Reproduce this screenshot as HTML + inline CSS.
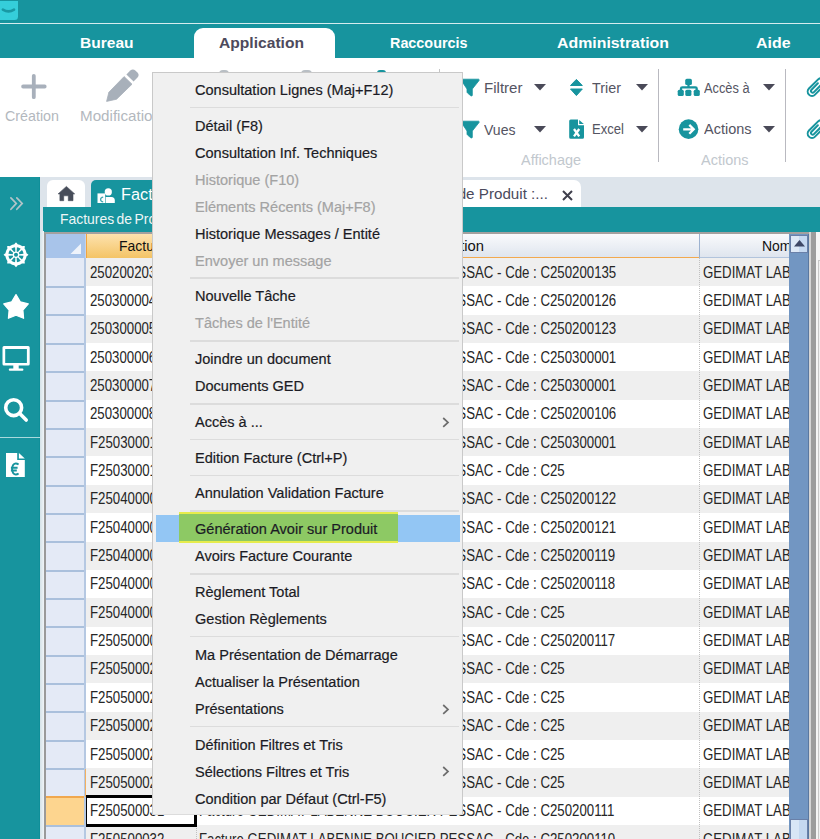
<!DOCTYPE html>
<html><head><meta charset="utf-8">
<style>
*{box-sizing:border-box;margin:0;padding:0}
html,body{width:820px;height:839px;overflow:hidden;background:#fff;font-family:"Liberation Sans",sans-serif}
.a{position:absolute}
.t{position:absolute;white-space:nowrap;line-height:1;transform-origin:0 0}
</style></head><body>
<div class="a" style="left:0;top:0;width:820px;height:57.5px;background:#17949e"></div>
<div class="a" style="left:0;top:0.8px;width:18.3px;height:19.4px;background:#35ceda;border-radius:0 0 3.5px 0"></div>
<svg class="a" style="left:0;top:0" width="18" height="20"><path d="M2.9 9.7 Q8.6 13.2 14 9.7" stroke="#1999a4" stroke-width="2.7" fill="none" stroke-linecap="round"/></svg>
<div class="a" style="left:0;top:22.8px;width:820px;height:1.7px;background:#d5ecee"></div>
<div class="a" style="left:193.5px;top:27.7px;width:141px;height:30px;background:#fff;border-radius:9px 9px 0 0"></div>
<div class="t" style="left:80.3px;top:35.08px;font-size:15.5px;color:#fff;font-weight:700;transform:scaleX(1.0018)">Bureau</div>
<div class="t" style="left:219.3px;top:34.68px;font-size:15.5px;color:#4d4a5c;font-weight:700;transform:scaleX(1.0072)">Application</div>
<div class="t" style="left:390.3px;top:34.68px;font-size:15.5px;color:#fff;font-weight:700;transform:scaleX(0.9273)">Raccourcis</div>
<div class="t" style="left:557px;top:34.98px;font-size:15.5px;color:#fff;font-weight:700;transform:scaleX(1.0240)">Administration</div>
<div class="t" style="left:756px;top:35.08px;font-size:15.5px;color:#fff;font-weight:700;transform:scaleX(1.0270)">Aide</div>
<svg class="a" style="left:20px;top:73px" width="28" height="28"><path d="M13.8 2.8 V24.2 M3.1 13.5 H24.7" stroke="#a8b0bb" stroke-width="3.8" stroke-linecap="round"/></svg>
<div class="t" style="left:5.2px;top:109.72px;font-size:13.8px;color:#b3b8be;transform:scaleX(1.0354)">Création</div>
<svg class="a" style="left:100px;top:64px" width="44" height="44"><path d="M6.6 37.4 L8.9 28.2 L24.1 12.6 L32 20.2 L16.6 35.2 Z" fill="#a8b0ba" stroke="#a8b0ba" stroke-width="0.8" stroke-linejoin="round"/><path d="M26.4 10.5 L30.3 6.6 Q32.9 4.4 35.6 6.8 L37.4 8.6 Q39.8 11.2 37.5 13.6 L33.6 17.6 Z" fill="#a8b0ba"/></svg>
<div class="t" style="left:80.3px;top:109.72px;font-size:13.8px;color:#b3b8be;transform:scaleX(1.1002)">Modification</div>
<div class="a" style="left:218.5px;top:70.3px;width:10px;height:4px;background:#b8bec4;border-radius:4px 4px 0 0"></div>
<div class="a" style="left:300.5px;top:70.3px;width:11px;height:4px;background:#b8bec4;border-radius:4px 4px 0 0"></div>
<div class="a" style="left:377px;top:69.5px;width:9px;height:4px;background:#17949e;border-radius:3px 3px 0 0"></div>
<div class="a" style="left:439px;top:69px;width:1px;height:94px;background:#c4c4c4"></div>
<svg class="a" style="left:455px;top:76px" width="30" height="24"><path d="M5.5 3.2 H23.6 Q24.6 3.4 24 4.6 L17.3 13 V19 Q17.3 20.6 15.8 19.8 L12.5 17 Q12 16.5 12 15.8 V13 Z" fill="#17949e" stroke="#17949e" stroke-width="0.8" stroke-linejoin="round"/></svg>
<div class="t" style="left:484.2px;top:80.75px;font-size:14px;color:#545462;transform:scaleX(1.0760)">Filtrer</div>
<svg class="a" style="left:534px;top:84px" width="12" height="7"><path d="M0 0 H12 L6 6.5 Z" fill="#4a4a58"/></svg>
<svg class="a" style="left:564px;top:76px" width="26" height="24"><path d="M12.4 3.4 L18.3 9.5 H6.5 Z M6.5 13 H18.3 L12.4 19.6 Z" fill="#17949e" stroke="#17949e" stroke-width="1" stroke-linejoin="round"/></svg>
<div class="t" style="left:591.5px;top:80.75px;font-size:14px;color:#545462;transform:scaleX(1.0260)">Trier</div>
<svg class="a" style="left:636px;top:84px" width="12" height="7"><path d="M0 0 H12 L6 6.5 Z" fill="#4a4a58"/></svg>
<svg class="a" style="left:455px;top:118px" width="30" height="24"><path d="M5.5 3.2 H23.6 Q24.6 3.4 24 4.6 L17.3 13 V19 Q17.3 20.6 15.8 19.8 L12.5 17 Q12 16.5 12 15.8 V13 Z" fill="#17949e" stroke="#17949e" stroke-width="0.8" stroke-linejoin="round"/></svg>
<div class="t" style="left:484px;top:122.95px;font-size:14px;color:#545462;transform:scaleX(1.0035)">Vues</div>
<svg class="a" style="left:534px;top:126px" width="12" height="7"><path d="M0 0 H12 L6 6.5 Z" fill="#4a4a58"/></svg>
<svg class="a" style="left:564px;top:116px" width="26" height="26"><path d="M5.2 5 Q5.2 3.5 6.7 3.5 H14 V9.3 H20 V21.3 Q20 22.8 18.5 22.8 H6.7 Q5.2 22.8 5.2 21.3 Z" fill="#17949e"/><path d="M15.2 3.9 L19.8 8.1 H15.2 Z" fill="#17949e"/><path d="M10 13 L15.2 20.4 M15.2 13 L10 20.4" stroke="#fff" stroke-width="2.3"/></svg>
<div class="t" style="left:591.5px;top:122.45px;font-size:14px;color:#545462;transform:scaleX(0.9347)">Excel</div>
<svg class="a" style="left:636px;top:126px" width="12" height="7"><path d="M0 0 H12 L6 6.5 Z" fill="#4a4a58"/></svg>
<div class="t" style="left:520.8px;top:152.53px;font-size:14.5px;color:#c2c8ce;transform:scaleX(0.9966)">Affichage</div>
<div class="a" style="left:658.3px;top:69px;width:1.2px;height:93px;background:#b9b9c0"></div>
<svg class="a" style="left:674px;top:74px" width="30" height="26"><rect x="11.2" y="4.8" width="6.7" height="6.3" rx="1.6" fill="#17949e"/><path d="M14.5 10 V14 M7 16.5 V14.6 Q7 13.3 8.3 13.3 H21.4 Q22.7 13.3 22.7 14.6 V16.5" stroke="#17949e" stroke-width="2.3" fill="none"/><rect x="3.7" y="15.7" width="6.1" height="6.4" rx="1.6" fill="#17949e"/><rect x="11.3" y="15.7" width="6.1" height="6.4" rx="1.6" fill="#17949e"/><rect x="19.7" y="15.7" width="6.1" height="6.4" rx="1.6" fill="#17949e"/></svg>
<div class="t" style="left:703.5px;top:80.75px;font-size:14px;color:#545462;transform:scaleX(0.9134)">Accès à</div>
<svg class="a" style="left:763px;top:84px" width="12" height="7"><path d="M0 0 H12 L6 6.5 Z" fill="#4a4a58"/></svg>
<svg class="a" style="left:674px;top:114px" width="30" height="30"><circle cx="14.55" cy="15.15" r="9.8" fill="#17949e"/><path d="M9.2 15.3 H19.6 M15.3 10.9 L19.7 15.3 L15.3 19.7" stroke="#fff" stroke-width="2.3" fill="none" stroke-linejoin="miter"/></svg>
<div class="t" style="left:703.5px;top:122.35px;font-size:14px;color:#545462;transform:scaleX(1.0344)">Actions</div>
<svg class="a" style="left:763px;top:125.5px" width="12" height="7"><path d="M0 0 H12 L6 6.5 Z" fill="#4a4a58"/></svg>
<div class="t" style="left:701px;top:152.53px;font-size:14.5px;color:#c2c8ce;transform:scaleX(0.9987)">Actions</div>
<div class="a" style="left:785px;top:69px;width:1.2px;height:93px;background:#b9b9c0"></div>
<svg class="a" style="left:796px;top:72px" width="24" height="30"><g transform="translate(16 19.6) rotate(45)"><path d="M-1.7 -10 V-1 A1.7 1.7 0 0 0 1.7 -1 V-13 A3 3 0 0 0 -4.3 -13 V0 A4.3 4.3 0 0 0 4.3 0 V-20" stroke="#17949e" stroke-width="2" fill="none" stroke-linecap="round"/></g></svg>
<svg class="a" style="left:796px;top:114px" width="24" height="30"><g transform="translate(16 19.6) rotate(45)"><path d="M-1.7 -10 V-1 A1.7 1.7 0 0 0 1.7 -1 V-13 A3 3 0 0 0 -4.3 -13 V0 A4.3 4.3 0 0 0 4.3 0 V-20" stroke="#17949e" stroke-width="2" fill="none" stroke-linecap="round"/></g></svg>
<div class="a" style="left:0;top:177px;width:820px;height:662px;background:#dde4eb"></div>
<div class="a" style="left:0;top:177px;width:40.3px;height:662px;background:#17949e"></div>
<div class="a" style="left:39.2px;top:177px;width:1.1px;height:662px;background:#0f8f99"></div>
<svg class="a" style="left:0;top:188px" width="32" height="32"><path d="M10.9 9.8 L16.3 15.4 L10.9 21.3 M16.8 9.8 L22.2 15.4 L16.8 21.3" stroke="#b3c4c8" stroke-width="1.7" fill="none" stroke-linecap="round"/></svg>
<svg class="a" style="left:0;top:0" width="41" height="480"><path fill-rule="evenodd" d="M28.40 254.80 L27.94 255.27 L27.46 255.70 L26.97 256.10 L26.47 256.46 L26.40 256.87 L26.31 257.27 L26.20 257.68 L26.08 258.08 L25.94 258.47 L25.79 258.86 L25.63 259.24 L25.44 259.61 L25.25 259.98 L25.04 260.34 L24.81 260.69 L24.58 261.03 L24.68 261.64 L24.74 262.27 L24.78 262.91 L24.77 263.57 L24.11 263.58 L23.47 263.54 L22.84 263.48 L22.23 263.38 L21.89 263.61 L21.54 263.84 L21.18 264.05 L20.81 264.24 L20.44 264.43 L20.06 264.59 L19.67 264.74 L19.28 264.88 L18.88 265.00 L18.47 265.11 L18.07 265.20 L17.66 265.27 L17.30 265.77 L16.90 266.26 L16.47 266.74 L16.00 267.20 L15.53 266.74 L15.10 266.26 L14.70 265.77 L14.34 265.27 L13.93 265.20 L13.53 265.11 L13.12 265.00 L12.72 264.88 L12.33 264.74 L11.94 264.59 L11.56 264.43 L11.19 264.24 L10.82 264.05 L10.46 263.84 L10.11 263.61 L9.77 263.38 L9.16 263.48 L8.53 263.54 L7.89 263.58 L7.23 263.57 L7.22 262.91 L7.26 262.27 L7.32 261.64 L7.42 261.03 L7.19 260.69 L6.96 260.34 L6.75 259.98 L6.56 259.61 L6.37 259.24 L6.21 258.86 L6.06 258.47 L5.92 258.08 L5.80 257.68 L5.69 257.27 L5.60 256.87 L5.53 256.46 L5.03 256.10 L4.54 255.70 L4.06 255.27 L3.60 254.80 L4.06 254.33 L4.54 253.90 L5.03 253.50 L5.53 253.14 L5.60 252.73 L5.69 252.33 L5.80 251.92 L5.92 251.52 L6.06 251.13 L6.21 250.74 L6.37 250.36 L6.56 249.99 L6.75 249.62 L6.96 249.26 L7.19 248.91 L7.42 248.57 L7.32 247.96 L7.26 247.33 L7.22 246.69 L7.23 246.03 L7.89 246.02 L8.53 246.06 L9.16 246.12 L9.77 246.22 L10.11 245.99 L10.46 245.76 L10.82 245.55 L11.19 245.36 L11.56 245.17 L11.94 245.01 L12.33 244.86 L12.72 244.72 L13.12 244.60 L13.53 244.49 L13.93 244.40 L14.34 244.33 L14.70 243.83 L15.10 243.34 L15.53 242.86 L16.00 242.40 L16.47 242.86 L16.90 243.34 L17.30 243.83 L17.66 244.33 L18.07 244.40 L18.47 244.49 L18.88 244.60 L19.28 244.72 L19.67 244.86 L20.06 245.01 L20.44 245.17 L20.81 245.36 L21.18 245.55 L21.54 245.76 L21.89 245.99 L22.23 246.22 L22.84 246.12 L23.47 246.06 L24.11 246.02 L24.77 246.03 L24.78 246.69 L24.74 247.33 L24.68 247.96 L24.58 248.57 L24.81 248.91 L25.04 249.26 L25.25 249.62 L25.44 249.99 L25.63 250.36 L25.79 250.74 L25.94 251.13 L26.08 251.52 L26.20 251.92 L26.31 252.33 L26.40 252.73 L26.47 253.14 L26.97 253.50 L27.46 253.90 L27.94 254.33 Z M19.34 255.42 L23.54 255.73 A7.6 7.6 0 0 1 21.99 259.48 L18.80 256.73 A3.4 3.4 0 0 0 19.34 255.42 Z M17.93 257.60 L20.68 260.79 A7.6 7.6 0 0 1 16.93 262.34 L16.62 258.14 A3.4 3.4 0 0 0 17.93 257.60 Z M15.38 258.14 L15.07 262.34 A7.6 7.6 0 0 1 11.32 260.79 L14.07 257.60 A3.4 3.4 0 0 0 15.38 258.14 Z M13.20 256.73 L10.01 259.48 A7.6 7.6 0 0 1 8.46 255.73 L12.66 255.42 A3.4 3.4 0 0 0 13.20 256.73 Z M12.66 254.18 L8.46 253.87 A7.6 7.6 0 0 1 10.01 250.12 L13.20 252.87 A3.4 3.4 0 0 0 12.66 254.18 Z M14.07 252.00 L11.32 248.81 A7.6 7.6 0 0 1 15.07 247.26 L15.38 251.46 A3.4 3.4 0 0 0 14.07 252.00 Z M16.62 251.46 L16.93 247.26 A7.6 7.6 0 0 1 20.68 248.81 L17.93 252.00 A3.4 3.4 0 0 0 16.62 251.46 Z M18.80 252.87 L21.99 250.12 A7.6 7.6 0 0 1 23.54 253.87 L19.34 254.18 A3.4 3.4 0 0 0 18.80 252.87 Z M18.00 254.8 A2 2 0 1 0 14.00 254.8 A2 2 0 1 0 18.00 254.8 Z" fill="#fff"/></svg>
<svg class="a" style="left:0;top:290px" width="32" height="32"><path d="M16 4.6 L20.3 11.8 L28.3 13.9 L22.9 20 L23.6 28.3 L16 25.3 L8.4 28.3 L9.1 20 L3.7 13.9 L11.7 11.8 Z" fill="#fff" stroke="#fff" stroke-width="1.2" stroke-linejoin="round"/></svg>
<svg class="a" style="left:0;top:342px" width="32" height="32"><path fill-rule="evenodd" d="M4 4.1 H28.2 Q29.7 4.1 29.7 5.6 V22.1 Q29.7 23.6 28.2 23.6 H4 Q2.5 23.6 2.5 22.1 V5.6 Q2.5 4.1 4 4.1 Z M5.2 7 V21.1 H26.9 V7 Z" fill="#fff"/><rect x="13.3" y="23" width="5.4" height="4" fill="#fff"/><rect x="8.8" y="26.5" width="14.6" height="2.2" rx="1" fill="#fff"/></svg>
<svg class="a" style="left:0;top:394px" width="32" height="32"><circle cx="13.65" cy="13.65" r="7.95" fill="none" stroke="#fff" stroke-width="3.6"/><path d="M20 19.8 L26.2 26" stroke="#fff" stroke-width="3.6" stroke-linecap="round"/></svg>
<div class="a" style="left:0;top:436.5px;width:40.3px;height:1.4px;background:#a9dadd"></div>
<svg class="a" style="left:0;top:448px" width="32" height="32"><path d="M6 5.1 H17.2 V12.1 H24.8 V29.1 H6 Z" fill="#fff"/><path d="M18.9 5.1 L24.8 10.5 H18.9 Z" fill="#fff"/><path d="M18.6 16.5 Q16.8 15.2 15 15.6 Q12.3 16.4 12.1 21 Q12.3 25.6 15 26.4 Q16.8 26.8 18.6 25.5 M10.9 19.8 H17.6 M10.9 22.5 H16.8" stroke="#17949e" stroke-width="1.9" fill="none"/></svg>
<div class="a" style="left:47px;top:179.5px;width:38px;height:28px;background:#fff;border-radius:6px 6px 0 0"></div>
<svg class="a" style="left:54px;top:182px" width="24" height="24"><path d="M12.4 4.4 L20.7 11.9 H19 V18.7 H14.3 V13.8 H9.7 V18.7 H5.9 V11.9 H4.1 Z" fill="#474d5a" stroke="#474d5a" stroke-width="0.6" stroke-linejoin="round"/></svg>
<div class="a" style="left:91.2px;top:180.2px;width:120px;height:28px;background:#17949e;border-radius:5px 5px 0 0"></div>
<svg class="a" style="left:94px;top:184px" width="24" height="24"><circle cx="14.3" cy="7.9" r="3.6" fill="#fff"/><path d="M11.7 19 V12.9 H17.5 Q20.8 12.9 20.8 16.5 V19 Z" fill="#fff"/><rect x="3.5" y="9.4" width="7.7" height="9.6" fill="#fff"/><path d="M9.2 13.2 Q6.6 13.6 6.6 15.5 Q6.6 17.6 9.2 17.8" stroke="#17949e" stroke-width="1.3" fill="none" opacity="0.8"/></svg>
<div class="t" style="left:121px;top:186.00px;font-size:16.3px;color:#fff">Factures de Produit</div>
<div class="a" style="left:380px;top:179.5px;width:200.5px;height:28px;background:#fff;border-radius:7px 7px 0 0"></div>
<div class="t" style="left:401.95px;top:186.13px;font-size:15.2px;color:#4a4a5c">Facture de Produit :...</div>
<svg class="a" style="left:561.5px;top:189.5px" width="11" height="11"><path d="M1 1 L10 10 M10 1 L1 10" stroke="#3f3f4c" stroke-width="2"/></svg>
<div class="a" style="left:43px;top:207px;width:777px;height:24.6px;background:#17949e"></div>
<div class="a" style="left:40.3px;top:231px;width:3.7px;height:608px;background:linear-gradient(90deg,#d4e2e8,#f0f4f7)"></div>
<div class="t" style="left:59.8px;top:211.77px;font-size:14.8px;color:#eef6f6;transform:scaleX(0.94);word-spacing:-1.5px">Factures de Produit</div>
<div class="a" style="left:44px;top:232px;width:767px;height:607px;background:#fff;border-left:2px solid #9a9a9a;border-top:2px solid #a3a09f"></div>
<div class="a" style="left:46px;top:234px;width:39.5px;height:24px;background:#a8c4ea;border-right:1px solid #c4d4ec"></div>
<svg class="a" style="left:70px;top:243px" width="12" height="12"><path d="M11 0.5 V11 H0.5 Z" fill="#eef3fb"/></svg>
<div class="a" style="left:85.5px;top:234px;width:110.5px;height:24px;background:linear-gradient(#fde2ae,#f4c466);border-left:1.5px solid #f0a540"></div>
<div class="t" style="left:118.5px;top:238.28px;font-size:15.5px;color:#111;transform:scaleX(0.9)">Facture</div>
<div class="a" style="left:196px;top:234px;width:503px;height:24.5px;background:linear-gradient(#f9fafc,#dfe5ee);border-bottom:2px solid #f2a94e"></div>
<div class="t" style="left:409.5px;top:238.28px;font-size:15.5px;color:#111;transform:scaleX(0.9545)">Description</div>
<div class="a" style="left:698.8px;top:234px;width:90.2px;height:24.5px;background:linear-gradient(#f9fafc,#dfe5ee);border-left:1.3px solid #9cb2d0;border-bottom:2px solid #b2c4dc"></div>
<div class="t" style="left:762px;top:238.28px;font-size:15.5px;color:#111;transform:scaleX(0.9)">Nom</div>
<div class="a" style="left:46px;top:258.00px;width:39.5px;height:28.35px;background:#e4eaf6"></div>
<div class="a" style="left:85.5px;top:258.00px;width:703.5px;height:28.35px;background:#efefef"></div>
<div class="t" style="left:89.5px;top:264.56px;font-size:16px;color:#262626;transform:scaleX(0.827)">250200203</div>
<div class="t" style="left:199.3px;top:264.56px;font-size:16px;color:#262626;transform:scaleX(0.827)">Facture GEDIMAT LABENNE BOUCIER PESSAC - Cde : C250200135</div>
<div class="t" style="left:703px;top:264.56px;font-size:16px;color:#262626;transform:scaleX(0.827)">GEDIMAT LABENNE</div>
<div class="a" style="left:46px;top:286.35px;width:39.5px;height:28.35px;background:#e4eaf6"></div>
<div class="a" style="left:85.5px;top:286.35px;width:703.5px;height:28.35px;background:#ffffff"></div>
<div class="t" style="left:89.5px;top:292.91px;font-size:16px;color:#262626;transform:scaleX(0.827)">250300004</div>
<div class="t" style="left:199.3px;top:292.91px;font-size:16px;color:#262626;transform:scaleX(0.827)">Facture GEDIMAT LABENNE BOUCIER PESSAC - Cde : C250200126</div>
<div class="t" style="left:703px;top:292.91px;font-size:16px;color:#262626;transform:scaleX(0.827)">GEDIMAT LABENNE</div>
<div class="a" style="left:46px;top:314.70px;width:39.5px;height:28.35px;background:#e4eaf6"></div>
<div class="a" style="left:85.5px;top:314.70px;width:703.5px;height:28.35px;background:#efefef"></div>
<div class="t" style="left:89.5px;top:321.26px;font-size:16px;color:#262626;transform:scaleX(0.827)">250300005</div>
<div class="t" style="left:199.3px;top:321.26px;font-size:16px;color:#262626;transform:scaleX(0.827)">Facture GEDIMAT LABENNE BOUCIER PESSAC - Cde : C250200123</div>
<div class="t" style="left:703px;top:321.26px;font-size:16px;color:#262626;transform:scaleX(0.827)">GEDIMAT LABENNE</div>
<div class="a" style="left:46px;top:343.05px;width:39.5px;height:28.35px;background:#e4eaf6"></div>
<div class="a" style="left:85.5px;top:343.05px;width:703.5px;height:28.35px;background:#ffffff"></div>
<div class="t" style="left:89.5px;top:349.61px;font-size:16px;color:#262626;transform:scaleX(0.827)">250300006</div>
<div class="t" style="left:199.3px;top:349.61px;font-size:16px;color:#262626;transform:scaleX(0.827)">Facture GEDIMAT LABENNE BOUCIER PESSAC - Cde : C250300001</div>
<div class="t" style="left:703px;top:349.61px;font-size:16px;color:#262626;transform:scaleX(0.827)">GEDIMAT LABENNE</div>
<div class="a" style="left:46px;top:371.40px;width:39.5px;height:28.35px;background:#e4eaf6"></div>
<div class="a" style="left:85.5px;top:371.40px;width:703.5px;height:28.35px;background:#efefef"></div>
<div class="t" style="left:89.5px;top:377.96px;font-size:16px;color:#262626;transform:scaleX(0.827)">250300007</div>
<div class="t" style="left:199.3px;top:377.96px;font-size:16px;color:#262626;transform:scaleX(0.827)">Facture GEDIMAT LABENNE BOUCIER PESSAC - Cde : C250300001</div>
<div class="t" style="left:703px;top:377.96px;font-size:16px;color:#262626;transform:scaleX(0.827)">GEDIMAT LABENNE</div>
<div class="a" style="left:46px;top:399.75px;width:39.5px;height:28.35px;background:#e4eaf6"></div>
<div class="a" style="left:85.5px;top:399.75px;width:703.5px;height:28.35px;background:#ffffff"></div>
<div class="t" style="left:89.5px;top:406.31px;font-size:16px;color:#262626;transform:scaleX(0.827)">250300008</div>
<div class="t" style="left:199.3px;top:406.31px;font-size:16px;color:#262626;transform:scaleX(0.827)">Facture GEDIMAT LABENNE BOUCIER PESSAC - Cde : C250200106</div>
<div class="t" style="left:703px;top:406.31px;font-size:16px;color:#262626;transform:scaleX(0.827)">GEDIMAT LABENNE</div>
<div class="a" style="left:46px;top:428.10px;width:39.5px;height:28.35px;background:#e4eaf6"></div>
<div class="a" style="left:85.5px;top:428.10px;width:703.5px;height:28.35px;background:#efefef"></div>
<div class="t" style="left:89.5px;top:434.66px;font-size:16px;color:#262626;transform:scaleX(0.827)">F250300011</div>
<div class="t" style="left:199.3px;top:434.66px;font-size:16px;color:#262626;transform:scaleX(0.827)">Facture GEDIMAT LABENNE BOUCIER PESSAC - Cde : C250300001</div>
<div class="t" style="left:703px;top:434.66px;font-size:16px;color:#262626;transform:scaleX(0.827)">GEDIMAT LABENNE</div>
<div class="a" style="left:46px;top:456.45px;width:39.5px;height:28.35px;background:#e4eaf6"></div>
<div class="a" style="left:85.5px;top:456.45px;width:703.5px;height:28.35px;background:#ffffff"></div>
<div class="t" style="left:89.5px;top:463.01px;font-size:16px;color:#262626;transform:scaleX(0.827)">F250300012</div>
<div class="t" style="left:199.3px;top:463.01px;font-size:16px;color:#262626;transform:scaleX(0.827)">Facture GEDIMAT LABENNE BOUCIER PESSAC - Cde : C25</div>
<div class="t" style="left:703px;top:463.01px;font-size:16px;color:#262626;transform:scaleX(0.827)">GEDIMAT LABENNE</div>
<div class="a" style="left:46px;top:484.80px;width:39.5px;height:28.35px;background:#e4eaf6"></div>
<div class="a" style="left:85.5px;top:484.80px;width:703.5px;height:28.35px;background:#efefef"></div>
<div class="t" style="left:89.5px;top:491.36px;font-size:16px;color:#262626;transform:scaleX(0.827)">F250400001</div>
<div class="t" style="left:199.3px;top:491.36px;font-size:16px;color:#262626;transform:scaleX(0.827)">Facture GEDIMAT LABENNE BOUCIER PESSAC - Cde : C250200122</div>
<div class="t" style="left:703px;top:491.36px;font-size:16px;color:#262626;transform:scaleX(0.827)">GEDIMAT LABENNE</div>
<div class="a" style="left:46px;top:513.15px;width:39.5px;height:28.35px;background:#e4eaf6"></div>
<div class="a" style="left:85.5px;top:513.15px;width:703.5px;height:28.35px;background:#ffffff"></div>
<div class="t" style="left:89.5px;top:519.71px;font-size:16px;color:#262626;transform:scaleX(0.827)">F250400002</div>
<div class="t" style="left:199.3px;top:519.71px;font-size:16px;color:#262626;transform:scaleX(0.827)">Facture GEDIMAT LABENNE BOUCIER PESSAC - Cde : C250200121</div>
<div class="t" style="left:703px;top:519.71px;font-size:16px;color:#262626;transform:scaleX(0.827)">GEDIMAT LABENNE</div>
<div class="a" style="left:46px;top:541.50px;width:39.5px;height:28.35px;background:#e4eaf6"></div>
<div class="a" style="left:85.5px;top:541.50px;width:703.5px;height:28.35px;background:#efefef"></div>
<div class="t" style="left:89.5px;top:548.06px;font-size:16px;color:#262626;transform:scaleX(0.827)">F250400003</div>
<div class="t" style="left:199.3px;top:548.06px;font-size:16px;color:#262626;transform:scaleX(0.827)">Facture GEDIMAT LABENNE BOUCIER PESSAC - Cde : C250200119</div>
<div class="t" style="left:703px;top:548.06px;font-size:16px;color:#262626;transform:scaleX(0.827)">GEDIMAT LABENNE</div>
<div class="a" style="left:46px;top:569.85px;width:39.5px;height:28.35px;background:#e4eaf6"></div>
<div class="a" style="left:85.5px;top:569.85px;width:703.5px;height:28.35px;background:#ffffff"></div>
<div class="t" style="left:89.5px;top:576.41px;font-size:16px;color:#262626;transform:scaleX(0.827)">F250400004</div>
<div class="t" style="left:199.3px;top:576.41px;font-size:16px;color:#262626;transform:scaleX(0.827)">Facture GEDIMAT LABENNE BOUCIER PESSAC - Cde : C250200118</div>
<div class="t" style="left:703px;top:576.41px;font-size:16px;color:#262626;transform:scaleX(0.827)">GEDIMAT LABENNE</div>
<div class="a" style="left:46px;top:598.20px;width:39.5px;height:28.35px;background:#e4eaf6"></div>
<div class="a" style="left:85.5px;top:598.20px;width:703.5px;height:28.35px;background:#efefef"></div>
<div class="t" style="left:89.5px;top:604.76px;font-size:16px;color:#262626;transform:scaleX(0.827)">F250400005</div>
<div class="t" style="left:199.3px;top:604.76px;font-size:16px;color:#262626;transform:scaleX(0.827)">Facture GEDIMAT LABENNE BOUCIER PESSAC - Cde : C25</div>
<div class="t" style="left:703px;top:604.76px;font-size:16px;color:#262626;transform:scaleX(0.827)">GEDIMAT LABENNE</div>
<div class="a" style="left:46px;top:626.55px;width:39.5px;height:28.35px;background:#e4eaf6"></div>
<div class="a" style="left:85.5px;top:626.55px;width:703.5px;height:28.35px;background:#ffffff"></div>
<div class="t" style="left:89.5px;top:633.11px;font-size:16px;color:#262626;transform:scaleX(0.827)">F250500001</div>
<div class="t" style="left:199.3px;top:633.11px;font-size:16px;color:#262626;transform:scaleX(0.827)">Facture GEDIMAT LABENNE BOUCIER PESSAC - Cde : C250200117</div>
<div class="t" style="left:703px;top:633.11px;font-size:16px;color:#262626;transform:scaleX(0.827)">GEDIMAT LABENNE</div>
<div class="a" style="left:46px;top:654.90px;width:39.5px;height:28.35px;background:#e4eaf6"></div>
<div class="a" style="left:85.5px;top:654.90px;width:703.5px;height:28.35px;background:#efefef"></div>
<div class="t" style="left:89.5px;top:661.46px;font-size:16px;color:#262626;transform:scaleX(0.827)">F250500021</div>
<div class="t" style="left:199.3px;top:661.46px;font-size:16px;color:#262626;transform:scaleX(0.827)">Facture GEDIMAT LABENNE BOUCIER PESSAC - Cde : C25</div>
<div class="t" style="left:703px;top:661.46px;font-size:16px;color:#262626;transform:scaleX(0.827)">GEDIMAT LABENNE</div>
<div class="a" style="left:46px;top:683.25px;width:39.5px;height:28.35px;background:#e4eaf6"></div>
<div class="a" style="left:85.5px;top:683.25px;width:703.5px;height:28.35px;background:#ffffff"></div>
<div class="t" style="left:89.5px;top:689.81px;font-size:16px;color:#262626;transform:scaleX(0.827)">F250500022</div>
<div class="t" style="left:199.3px;top:689.81px;font-size:16px;color:#262626;transform:scaleX(0.827)">Facture GEDIMAT LABENNE BOUCIER PESSAC - Cde : C25</div>
<div class="t" style="left:703px;top:689.81px;font-size:16px;color:#262626;transform:scaleX(0.827)">GEDIMAT LABENNE</div>
<div class="a" style="left:46px;top:711.60px;width:39.5px;height:28.35px;background:#e4eaf6"></div>
<div class="a" style="left:85.5px;top:711.60px;width:703.5px;height:28.35px;background:#efefef"></div>
<div class="t" style="left:89.5px;top:718.16px;font-size:16px;color:#262626;transform:scaleX(0.827)">F250500023</div>
<div class="t" style="left:199.3px;top:718.16px;font-size:16px;color:#262626;transform:scaleX(0.827)">Facture GEDIMAT LABENNE BOUCIER PESSAC - Cde : C25</div>
<div class="t" style="left:703px;top:718.16px;font-size:16px;color:#262626;transform:scaleX(0.827)">GEDIMAT LABENNE</div>
<div class="a" style="left:46px;top:739.95px;width:39.5px;height:28.35px;background:#e4eaf6"></div>
<div class="a" style="left:85.5px;top:739.95px;width:703.5px;height:28.35px;background:#ffffff"></div>
<div class="t" style="left:89.5px;top:746.51px;font-size:16px;color:#262626;transform:scaleX(0.827)">F250500024</div>
<div class="t" style="left:199.3px;top:746.51px;font-size:16px;color:#262626;transform:scaleX(0.827)">Facture GEDIMAT LABENNE BOUCIER PESSAC - Cde : C25</div>
<div class="t" style="left:703px;top:746.51px;font-size:16px;color:#262626;transform:scaleX(0.827)">GEDIMAT LABENNE</div>
<div class="a" style="left:46px;top:768.30px;width:39.5px;height:28.35px;background:#e4eaf6"></div>
<div class="a" style="left:85.5px;top:768.30px;width:703.5px;height:28.35px;background:#efefef"></div>
<div class="t" style="left:89.5px;top:774.86px;font-size:16px;color:#262626;transform:scaleX(0.827)">F250500025</div>
<div class="t" style="left:199.3px;top:774.86px;font-size:16px;color:#262626;transform:scaleX(0.827)">Facture GEDIMAT LABENNE BOUCIER PESSAC - Cde : C25</div>
<div class="t" style="left:703px;top:774.86px;font-size:16px;color:#262626;transform:scaleX(0.827)">GEDIMAT LABENNE</div>
<div class="a" style="left:46px;top:796.65px;width:39.5px;height:28.35px;background:#fdd58f"></div>
<div class="a" style="left:85.5px;top:796.65px;width:703.5px;height:28.35px;background:#ffffff"></div>
<div class="t" style="left:89.5px;top:803.21px;font-size:16px;color:#262626;transform:scaleX(0.827)">F250500031</div>
<div class="t" style="left:199.3px;top:803.21px;font-size:16px;color:#262626;transform:scaleX(0.827)">Facture GEDIMAT LABENNE BOUCIER PESSAC - Cde : C250200111</div>
<div class="t" style="left:703px;top:803.21px;font-size:16px;color:#262626;transform:scaleX(0.827)">GEDIMAT LABENNE</div>
<div class="a" style="left:46px;top:825.00px;width:39.5px;height:28.35px;background:#e4eaf6"></div>
<div class="a" style="left:85.5px;top:825.00px;width:703.5px;height:28.35px;background:#efefef"></div>
<div class="t" style="left:89.5px;top:831.56px;font-size:16px;color:#262626;transform:scaleX(0.827)">F250500032</div>
<div class="t" style="left:199.3px;top:831.56px;font-size:16px;color:#262626;transform:scaleX(0.827)">Facture GEDIMAT LABENNE BOUCIER PESSAC - Cde : C250200110</div>
<div class="t" style="left:703px;top:831.56px;font-size:16px;color:#262626;transform:scaleX(0.827)">GEDIMAT LABENNE</div>
<div class="a" style="left:46px;top:853.35px;width:39.5px;height:28.35px;background:#e4eaf6"></div>
<div class="a" style="left:85.5px;top:853.35px;width:703.5px;height:28.35px;background:#ffffff"></div>
<div class="t" style="left:89.5px;top:859.91px;font-size:16px;color:#262626;transform:scaleX(0.827)">F250500033</div>
<div class="t" style="left:199.3px;top:859.91px;font-size:16px;color:#262626;transform:scaleX(0.827)">Facture GEDIMAT LABENNE BOUCIER PESSAC - Cde : C250200109</div>
<div class="t" style="left:703px;top:859.91px;font-size:16px;color:#262626;transform:scaleX(0.827)">GEDIMAT LABENNE</div>
<div class="a" style="left:46px;top:286px;width:39.5px;height:1.5px;background:#aac0dc"></div>
<div class="a" style="left:46px;top:314px;width:39.5px;height:1.5px;background:#aac0dc"></div>
<div class="a" style="left:46px;top:343px;width:39.5px;height:1.5px;background:#aac0dc"></div>
<div class="a" style="left:46px;top:371px;width:39.5px;height:1.5px;background:#aac0dc"></div>
<div class="a" style="left:46px;top:400px;width:39.5px;height:1.5px;background:#aac0dc"></div>
<div class="a" style="left:46px;top:428px;width:39.5px;height:1.5px;background:#aac0dc"></div>
<div class="a" style="left:46px;top:456px;width:39.5px;height:1.5px;background:#aac0dc"></div>
<div class="a" style="left:46px;top:485px;width:39.5px;height:1.5px;background:#aac0dc"></div>
<div class="a" style="left:46px;top:513px;width:39.5px;height:1.5px;background:#aac0dc"></div>
<div class="a" style="left:46px;top:541px;width:39.5px;height:1.5px;background:#aac0dc"></div>
<div class="a" style="left:46px;top:570px;width:39.5px;height:1.5px;background:#aac0dc"></div>
<div class="a" style="left:46px;top:598px;width:39.5px;height:1.5px;background:#aac0dc"></div>
<div class="a" style="left:46px;top:626px;width:39.5px;height:1.5px;background:#aac0dc"></div>
<div class="a" style="left:46px;top:655px;width:39.5px;height:1.5px;background:#aac0dc"></div>
<div class="a" style="left:46px;top:683px;width:39.5px;height:1.5px;background:#aac0dc"></div>
<div class="a" style="left:46px;top:711px;width:39.5px;height:1.5px;background:#aac0dc"></div>
<div class="a" style="left:46px;top:740px;width:39.5px;height:1.5px;background:#aac0dc"></div>
<div class="a" style="left:46px;top:768px;width:39.5px;height:1.5px;background:#aac0dc"></div>
<div class="a" style="left:46px;top:796px;width:39.5px;height:1.5px;background:#f0a84e"></div>
<div class="a" style="left:46px;top:825px;width:39.5px;height:1.5px;background:#aac0dc"></div>
<div class="a" style="left:46px;top:853px;width:39.5px;height:1.5px;background:#aac0dc"></div>
<div class="a" style="left:84.3px;top:258px;width:1.3px;height:581px;background:#b5c8e2"></div>
<div class="a" style="left:195.5px;top:258px;width:0;height:581px;border-left:1px dotted #c0c0c0"></div>
<div class="a" style="left:698.5px;top:258px;width:0;height:581px;border-left:1px dotted #c0c0c0"></div>
<div class="a" style="left:86.3px;top:795px;width:110.5px;height:31.7px;border-style:solid;border-color:#000;border-width:3px 3px 3.5px 1.7px"></div>
<div class="a" style="left:84.6px;top:768.5px;width:1.2px;height:28px;background:#f2b060"></div>
<div class="a" style="left:789px;top:234px;width:19.5px;height:605px;background:#7296c2;border-right:1.2px solid #5a78a0"></div>
<div class="a" style="left:789.5px;top:234.8px;width:18px;height:18px;background:linear-gradient(90deg,#dde8f6 50%,#c6d9f1 50%);border:1px solid #6a80a8"></div>
<svg class="a" style="left:793.5px;top:240px" width="11" height="7"><path d="M5.5 0 L11 6.5 H0 Z" fill="#3f4866"/></svg>
<div class="a" style="left:789.5px;top:818.5px;width:18px;height:25px;background:linear-gradient(90deg,#d8e6f6 50%,#c4d8f0 50%);border:1px solid #6a80a8"></div>
<div class="a" style="left:808.5px;top:232px;width:2.5px;height:607px;background:#d4d4d4"></div>
<div class="a" style="left:811px;top:232px;width:5px;height:607px;background:#9c9c9c"></div>
<div class="a" style="left:816px;top:232px;width:4px;height:607px;background:#f5f5f5"></div>
<div class="a" style="left:817.5px;top:260px;width:2.5px;height:579px;background:#f0f0f0;border-left:1px solid #c8c8c8;border-top:1px solid #c8c8c8"></div>
<div class="a" style="left:152px;top:72px;width:311px;height:743px;background:#f0f0f0;border:1px solid #c9c9c9;border-bottom-color:#dcdcdc"></div>
<div class="t" style="left:195.3px;top:81.83px;font-size:15.2px;color:#1b1b24;transform:scaleX(0.957);-webkit-text-stroke:0.2px #1b1b24">Consultation Lignes (Maj+F12)</div>
<div class="a" style="left:190px;top:106.70px;width:269px;height:1.5px;background:#dcdcdc"></div>
<div class="t" style="left:195.3px;top:117.60px;font-size:15.2px;color:#1b1b24;transform:scaleX(0.957);-webkit-text-stroke:0.2px #1b1b24">Détail (F8)</div>
<div class="t" style="left:195.3px;top:144.60px;font-size:15.2px;color:#1b1b24;transform:scaleX(0.957);-webkit-text-stroke:0.2px #1b1b24">Consultation Inf. Techniques</div>
<div class="t" style="left:195.3px;top:171.60px;font-size:15.2px;color:#a3a3a3;transform:scaleX(0.957);-webkit-text-stroke:0.2px #a3a3a3">Historique (F10)</div>
<div class="t" style="left:195.3px;top:198.60px;font-size:15.2px;color:#a3a3a3;transform:scaleX(0.957);-webkit-text-stroke:0.2px #a3a3a3">Eléments Récents (Maj+F8)</div>
<div class="t" style="left:195.3px;top:225.60px;font-size:15.2px;color:#1b1b24;transform:scaleX(0.957);-webkit-text-stroke:0.2px #1b1b24">Historique Messages / Entité</div>
<div class="t" style="left:195.3px;top:252.60px;font-size:15.2px;color:#a3a3a3;transform:scaleX(0.957);-webkit-text-stroke:0.2px #a3a3a3">Envoyer un message</div>
<div class="a" style="left:190px;top:277.47px;width:269px;height:1.5px;background:#dcdcdc"></div>
<div class="t" style="left:195.3px;top:288.37px;font-size:15.2px;color:#1b1b24;transform:scaleX(0.957);-webkit-text-stroke:0.2px #1b1b24">Nouvelle Tâche</div>
<div class="t" style="left:195.3px;top:315.37px;font-size:15.2px;color:#a3a3a3;transform:scaleX(0.957);-webkit-text-stroke:0.2px #a3a3a3">Tâches de l'Entité</div>
<div class="a" style="left:190px;top:340.24px;width:269px;height:1.5px;background:#dcdcdc"></div>
<div class="t" style="left:195.3px;top:351.14px;font-size:15.2px;color:#1b1b24;transform:scaleX(0.957);-webkit-text-stroke:0.2px #1b1b24">Joindre un document</div>
<div class="t" style="left:195.3px;top:378.14px;font-size:15.2px;color:#1b1b24;transform:scaleX(0.957);-webkit-text-stroke:0.2px #1b1b24">Documents GED</div>
<div class="a" style="left:190px;top:403.01px;width:269px;height:1.5px;background:#dcdcdc"></div>
<div class="t" style="left:195.3px;top:413.91px;font-size:15.2px;color:#1b1b24;transform:scaleX(0.957);-webkit-text-stroke:0.2px #1b1b24">Accès à ...</div>
<svg class="a" style="left:442px;top:416.78px" width="8" height="11"><path d="M1.2 1 L6 5.4 L1.2 9.8" stroke="#6c6c6c" stroke-width="1.7" fill="none"/></svg>
<div class="a" style="left:190px;top:438.78px;width:269px;height:1.5px;background:#dcdcdc"></div>
<div class="t" style="left:195.3px;top:449.68px;font-size:15.2px;color:#1b1b24;transform:scaleX(0.957);-webkit-text-stroke:0.2px #1b1b24">Edition Facture (Ctrl+P)</div>
<div class="a" style="left:190px;top:474.55px;width:269px;height:1.5px;background:#dcdcdc"></div>
<div class="t" style="left:195.3px;top:485.45px;font-size:15.2px;color:#1b1b24;transform:scaleX(0.957);-webkit-text-stroke:0.2px #1b1b24">Annulation Validation Facture</div>
<div class="a" style="left:190px;top:510.32px;width:269px;height:1.5px;background:#dcdcdc"></div>
<div class="a" style="left:155.5px;top:515.19px;width:304px;height:27px;background:#93c6f4"></div>
<div class="a" style="left:179.2px;top:512.09px;width:218.6px;height:31px;background:#8dc964;border-top:2px solid #e6ec4c;border-bottom:2px solid #e6ec4c"></div>
<div class="t" style="left:195.3px;top:521.22px;font-size:15.2px;color:#1b1b24;transform:scaleX(0.957);-webkit-text-stroke:0.2px #1b1b24">Génération Avoir sur Produit</div>
<div class="t" style="left:195.3px;top:548.22px;font-size:15.2px;color:#1b1b24;transform:scaleX(0.957);-webkit-text-stroke:0.2px #1b1b24">Avoirs Facture Courante</div>
<div class="a" style="left:190px;top:573.09px;width:269px;height:1.5px;background:#dcdcdc"></div>
<div class="t" style="left:195.3px;top:583.99px;font-size:15.2px;color:#1b1b24;transform:scaleX(0.957);-webkit-text-stroke:0.2px #1b1b24">Règlement Total</div>
<div class="t" style="left:195.3px;top:610.99px;font-size:15.2px;color:#1b1b24;transform:scaleX(0.957);-webkit-text-stroke:0.2px #1b1b24">Gestion Règlements</div>
<div class="a" style="left:190px;top:635.86px;width:269px;height:1.5px;background:#dcdcdc"></div>
<div class="t" style="left:195.3px;top:646.76px;font-size:15.2px;color:#1b1b24;transform:scaleX(0.957);-webkit-text-stroke:0.2px #1b1b24">Ma Présentation de Démarrage</div>
<div class="t" style="left:195.3px;top:673.76px;font-size:15.2px;color:#1b1b24;transform:scaleX(0.957);-webkit-text-stroke:0.2px #1b1b24">Actualiser la Présentation</div>
<div class="t" style="left:195.3px;top:700.76px;font-size:15.2px;color:#1b1b24;transform:scaleX(0.957);-webkit-text-stroke:0.2px #1b1b24">Présentations</div>
<svg class="a" style="left:442px;top:703.63px" width="8" height="11"><path d="M1.2 1 L6 5.4 L1.2 9.8" stroke="#6c6c6c" stroke-width="1.7" fill="none"/></svg>
<div class="a" style="left:190px;top:725.63px;width:269px;height:1.5px;background:#dcdcdc"></div>
<div class="t" style="left:195.3px;top:736.53px;font-size:15.2px;color:#1b1b24;transform:scaleX(0.957);-webkit-text-stroke:0.2px #1b1b24">Définition Filtres et Tris</div>
<div class="t" style="left:195.3px;top:763.53px;font-size:15.2px;color:#1b1b24;transform:scaleX(0.957);-webkit-text-stroke:0.2px #1b1b24">Sélections Filtres et Tris</div>
<svg class="a" style="left:442px;top:766.40px" width="8" height="11"><path d="M1.2 1 L6 5.4 L1.2 9.8" stroke="#6c6c6c" stroke-width="1.7" fill="none"/></svg>
<div class="t" style="left:195.3px;top:790.53px;font-size:15.2px;color:#1b1b24;transform:scaleX(0.957);-webkit-text-stroke:0.2px #1b1b24">Condition par Défaut (Ctrl-F5)</div>
</body></html>
